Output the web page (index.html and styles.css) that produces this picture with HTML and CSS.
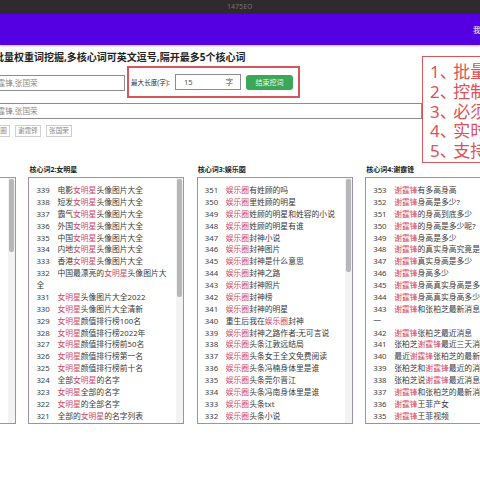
FILE: index.html
```html
<!DOCTYPE html>
<html lang="zh">
<head>
<meta charset="utf-8">
<title>1475EO</title>
<link rel="stylesheet" href="styles.css">
</head>
<body>
<div class="chrome">1475EO</div>
<header class="nav"><span class="nav-user">我的</span></header>
<main class="page">
  <h1 class="title">批量权重词挖掘,多核心词可英文逗号,隔开最多5个核心词</h1>
  <div class="controls">
    <div class="field field-main">谢霆锋,张国荣</div>
    <div class="limit">
      <span class="limit-label">最大长度(字):</span>
      <div class="field field-num"><span>15</span><span>字</span></div>
      <button class="stop">结束挖词</button>
    </div>
  </div>
  <div class="field field-wide">谢霆锋,张国荣</div>
  <div class="tags">
    <span class="tag tag-first">娱乐圈</span>
    <span class="tag">谢霆锋</span>
    <span class="tag">张国荣</span>
  </div>
  <section class="cols">
    <div class="col">
      <div class="col-head">核心词1:明星</div>
      <div class="box"><div class="thumb" style="height:73px"></div></div>
    </div>
    <div class="col">
      <div class="col-head">核心词2:女明星</div>
      <div class="box">
        <div class="thumb" style="height:118px"></div>
        <ul class="list">
          <li><span class="n">339</span>电影<em>女明星</em>头像图片大全</li>
          <li><span class="n">338</span>短发<em>女明星</em>头像图片大全</li>
          <li><span class="n">337</span>霸气<em>女明星</em>头像图片大全</li>
          <li><span class="n">336</span>外国<em>女明星</em>头像图片大全</li>
          <li><span class="n">335</span>中国<em>女明星</em>头像图片大全</li>
          <li><span class="n">334</span>内地<em>女明星</em>头像图片大全</li>
          <li><span class="n">333</span>香港<em>女明星</em>头像图片大全</li>
          <li><span class="n">332</span>中国最漂亮的<em>女明星</em>头像图片大全</li>
          <li><span class="n">331</span><em>女明星</em>头像图片大全2022</li>
          <li><span class="n">330</span><em>女明星</em>头像图片大全清新</li>
          <li><span class="n">329</span><em>女明星</em>颜值排行榜100名</li>
          <li><span class="n">328</span><em>女明星</em>颜值排行榜2022年</li>
          <li><span class="n">327</span><em>女明星</em>颜值排行榜前50名</li>
          <li><span class="n">326</span><em>女明星</em>颜值排行榜第一名</li>
          <li><span class="n">325</span><em>女明星</em>颜值排行榜前十名</li>
          <li><span class="n">324</span>全部<em>女明星</em>的名字</li>
          <li><span class="n">323</span><em>女明星</em>全部的名字</li>
          <li><span class="n">322</span><em>女明星</em>的全部名字</li>
          <li><span class="n">321</span>全部的<em>女明星</em>的名字列表</li>
        </ul>
      </div>
    </div>
    <div class="col">
      <div class="col-head">核心词3:娱乐圈</div>
      <div class="box">
        <div class="thumb" style="height:93px"></div>
        <ul class="list">
          <li><span class="n">351</span><em>娱乐圈</em>有姓顾的吗</li>
          <li><span class="n">350</span><em>娱乐圈</em>里姓顾的明星</li>
          <li><span class="n">349</span><em>娱乐圈</em>姓顾的明星和姓容的小说</li>
          <li><span class="n">348</span><em>娱乐圈</em>姓顾的明星有谁</li>
          <li><span class="n">347</span><em>娱乐圈</em>封神小说</li>
          <li><span class="n">346</span><em>娱乐圈</em>封神图片</li>
          <li><span class="n">345</span><em>娱乐圈</em>封神是什么意思</li>
          <li><span class="n">344</span><em>娱乐圈</em>封神之路</li>
          <li><span class="n">343</span><em>娱乐圈</em>封神照片</li>
          <li><span class="n">342</span><em>娱乐圈</em>封神榜</li>
          <li><span class="n">341</span><em>娱乐圈</em>封神的明星</li>
          <li><span class="n">340</span>重生后我在<em>娱乐圈</em>封神</li>
          <li><span class="n">339</span><em>娱乐圈</em>封神之路作者:无可言说</li>
          <li><span class="n">338</span><em>娱乐圈</em>头条江敦远结局</li>
          <li><span class="n">337</span><em>娱乐圈</em>头条女王全文免费阅读</li>
          <li><span class="n">336</span><em>娱乐圈</em>头条冯楠身体里是谁</li>
          <li><span class="n">335</span><em>娱乐圈</em>头条莞尔晋江</li>
          <li><span class="n">334</span><em>娱乐圈</em>头条冯南身体里是谁</li>
          <li><span class="n">333</span><em>娱乐圈</em>头条txt</li>
          <li><span class="n">332</span><em>娱乐圈</em>头条小说</li>
        </ul>
      </div>
    </div>
    <div class="col">
      <div class="col-head">核心词4:谢霆锋</div>
      <div class="box">
        <ul class="list">
          <li><span class="n">353</span><em>谢霆锋</em>有多高身高</li>
          <li><span class="n">352</span><em>谢霆锋</em>身高是多少?</li>
          <li><span class="n">351</span><em>谢霆锋</em>的身高到底多少</li>
          <li><span class="n">350</span><em>谢霆锋</em>的身高是多少呢?</li>
          <li><span class="n">349</span><em>谢霆锋</em>身高是多少</li>
          <li><span class="n">348</span><em>谢霆锋</em>的真实身高究竟是</li>
          <li><span class="n">347</span><em>谢霆锋</em>真实身高是多少</li>
          <li><span class="n">346</span><em>谢霆锋</em>身高多少</li>
          <li><span class="n">345</span><em>谢霆锋</em>身高真实身高是多少</li>
          <li><span class="n">344</span><em>谢霆锋</em>身高真实身高多少</li>
          <li><span class="n">343</span><em>谢霆锋</em>和张柏芝最新消息今天新一</li>
          <li><span class="n">342</span><em>谢霆锋</em>张柏芝最近消息</li>
          <li><span class="n">341</span>张柏芝<em>谢霆锋</em>最近三天消息</li>
          <li><span class="n">340</span>最近<em>谢霆锋</em>张柏芝的最新消</li>
          <li><span class="n">339</span>张柏芝和<em>谢霆锋</em>最近的消息</li>
          <li><span class="n">338</span>张柏芝说<em>谢霆锋</em>最近消息</li>
          <li><span class="n">337</span><em>谢霆锋</em>和张柏芝的最新消息</li>
          <li><span class="n">336</span><em>谢霆锋</em>王菲产女</li>
          <li><span class="n">335</span><em>谢霆锋</em>王菲视频</li>
        </ul>
      </div>
    </div>
  </section>
</main>
<aside class="notes">
  <p>1<span class="sep">、</span>批量</p>
  <p>2<span class="sep">、</span>控制</p>
  <p>3<span class="sep">、</span>必须</p>
  <p>4<span class="sep">、</span>实时</p>
  <p>5<span class="sep">、</span>支持</p>
</aside>
</body>
</html>
```

FILE: styles.css
```css
* { box-sizing: border-box; }
html, body { margin: 0; padding: 0; height: 480px; overflow: hidden; background: #fff; }
body {
  width: 480px;
  font-family: "Noto Sans", "Noto Sans CJK SC", sans-serif;
  color: #333;
  position: relative;
}
.chrome {
  height: 14px;
  background: #2f2a2d;
  color: #77767a;
  font-size: 6.5px;
  line-height: 13px;
  text-align: center;
  letter-spacing: .3px;
}
.nav {
  height: 31px;
  background: #5400e2;
  box-shadow: 0 1px 2px rgba(84, 0, 226, .35);
  display: flex;
  align-items: center;
  padding-left: 473px;
  white-space: nowrap;
  overflow: hidden;
}
.nav-user { color: #fff; font-size: 7.5px; flex: none; }
.page { margin-left: -140px; width: 700px; }
.title {
  margin: 5px 0 0 134px;
  font-size: 10px;
  line-height: 14px;
  font-weight: 700;
  color: #222;
  white-space: nowrap;
}
.controls { display: flex; align-items: flex-start; margin-top: 2px; }
.field {
  border: 1px solid #8d8b95;
  border-left: 0;
  background: #fff;
  color: #8a8a8a;
  font-size: 7.6px;
  height: 16px;
  line-height: 14px;
  white-space: nowrap;
}
.field-main { width: 265px; margin-top: 9px; padding-left: 130px; }
.limit {
  width: 173px;
  height: 32px;
  margin-left: 2px;
  border: 2px solid #d7555c;
  display: flex;
  align-items: center;
  padding-left: 2px;
}
.limit-label { font-size: 6.6px; color: #333; white-space: nowrap; width: 44px; flex: none; }
.field-num {
  border: 1px solid #8d8b95;
  width: 66px;
  flex: none;
  display: flex;
  justify-content: space-between;
  padding: 0 7px 0 8px;
  color: #555;
}
.stop {
  margin-left: 5px;
  width: 47px;
  height: 15px;
  border: 0;
  border-radius: 3px;
  background: #3ba858;
  color: #eef7ef;
  font: 7px/15px "Noto Sans CJK SC", sans-serif;
  padding: 0;
}
.field-wide { width: 562px; margin-top: 5px; padding-left: 130px; }
.tags { display: flex; gap: 5px; margin: 6px 0 0 124px; height: 12px; }
.tag {
  border: 1px solid #cfcfcf;
  color: #8a8a8a;
  font-size: 6.6px;
  line-height: 10px;
  width: 26px;
  text-align: center;
  white-space: nowrap;
}
.cols { display: flex; gap: 12.4px; margin-top: 27px; }
.col { width: 156px; flex: none; }
.col-head { font-size: 7px; font-weight: 700; color: #222; line-height: 11px; height: 13px; white-space: nowrap; padding-left: 1px; }
.box {
  position: relative;
  height: 247px;
  border: 1px solid #9c90b5;
  background: #fff;
  overflow: hidden;
  padding: 7px 12px 0 7px;
}
.box::after {
  content: "";
  position: absolute;
  top: 0; right: 0; bottom: 0;
  width: 7px;
  background: #f3f3f3;
}
.thumb {
  position: absolute;
  top: 1px;
  right: 1px;
  width: 5px;
  background: #b7b7ba;
  border-radius: 2px;
  z-index: 1;
}
.list { margin: 0; padding: 0; list-style: none; }
.list li { font-size: 7.8px; line-height: 11.87px; color: #3a3a3a; }
.n { display: inline-block; width: 21px; color: #444; }
em { font-style: normal; color: #d24a68; }
.notes {
  position: absolute;
  left: 422px;
  top: 56px;
  width: 100px;
  height: 107px;
  background: #fff;
  border: 1px solid #d7555c;
  color: #dc5158;
  font-size: 17px;
  line-height: 19.8px;
  padding: 5px 0 0 7px;
}
.notes p { margin: 0; white-space: nowrap; }
.sep { margin-right: -3.5px; }
```
